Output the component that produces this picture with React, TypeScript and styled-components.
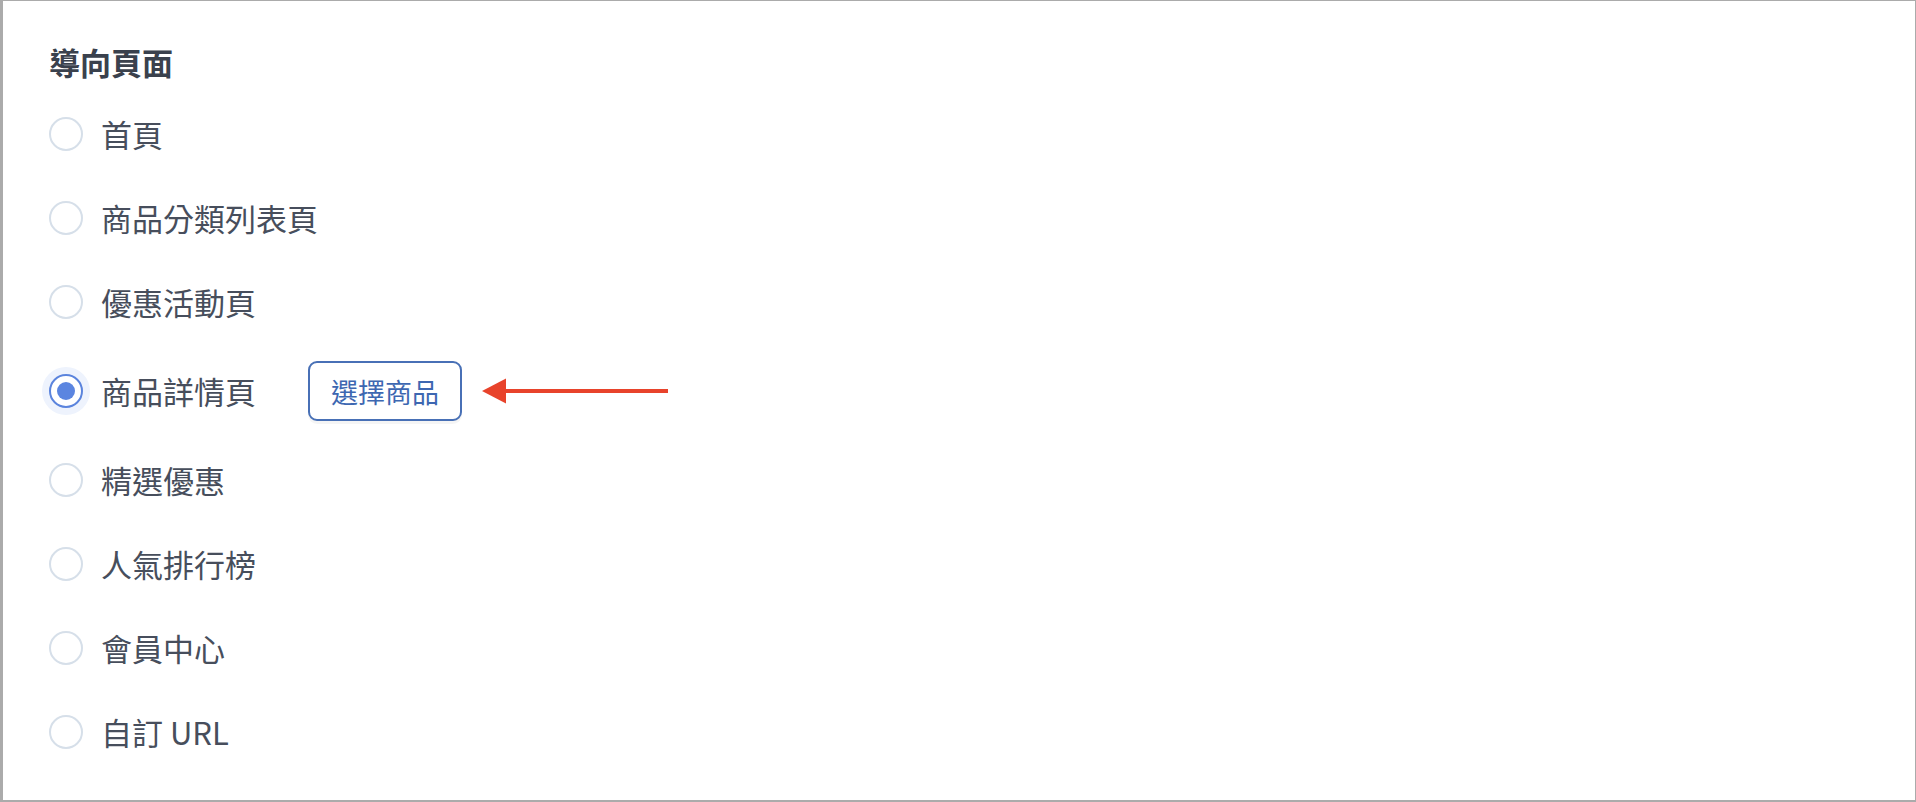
import React, { useState } from "react";
import styled, { createGlobalStyle } from "styled-components";

const GlobalStyle = createGlobalStyle`
  html, body {
    margin: 0;
    padding: 0;
    background: #ffffff;
  }
  body {
    font-family: "Noto Sans CJK TC", "Noto Sans", sans-serif;
  }
`;

const Frame = styled.div`
  box-sizing: border-box;
  width: 1916px;
  height: 802px;
  background: #ffffff;
  border-style: solid;
  border-color: #ababab;
  border-width: 1px 1px 2px 3px;
  padding: 40px 46px 0;
`;

const Title = styled.h2`
  margin: 0 0 26px;
  font-size: 31px;
  line-height: 42px;
  font-weight: 700;
  color: #3a414d;
`;

const Options = styled.div`
  display: flex;
  flex-direction: column;
  gap: 34px;
`;

const Row = styled.label`
  display: flex;
  align-items: center;
  min-height: 50px;
  cursor: pointer;
`;

const Radio = styled.span<{ $checked: boolean }>`
  box-sizing: border-box;
  flex: 0 0 auto;
  width: 34px;
  height: 34px;
  border-radius: 50%;
  border: 2px solid ${(p) => (p.$checked ? "#5b84dd" : "#d6dfe9")};
  background: #ffffff;
  box-shadow: ${(p) => (p.$checked ? "0 0 0 7px #eef3fd" : "none")};
  display: flex;
  align-items: center;
  justify-content: center;

  &::after {
    content: "";
    display: ${(p) => (p.$checked ? "block" : "none")};
    width: 18px;
    height: 18px;
    border-radius: 50%;
    background: #5b85e0;
  }
`;

const Label = styled.span`
  margin-left: 18px;
  font-size: 31px;
  line-height: 50px;
  color: #474e5c;
`;

const PickButton = styled.button`
  box-sizing: border-box;
  margin-left: 52px;
  height: 60px;
  padding: 0 21px;
  border: 2px solid #4870b6;
  border-radius: 9px;
  background: #ffffff;
  box-shadow: 0 3px 0 rgba(0, 0, 0, 0.04);
  font-family: "Noto Sans CJK TC", "Noto Sans", sans-serif;
  font-size: 27px;
  color: #3d67b1;
  cursor: pointer;
`;

const Pointer = styled.svg`
  margin-left: 20px;
  flex: 0 0 auto;
`;

const options = [
  "首頁",
  "商品分類列表頁",
  "優惠活動頁",
  "商品詳情頁",
  "精選優惠",
  "人氣排行榜",
  "會員中心",
  "自訂 URL",
];

export default function App() {
  const [selected, setSelected] = useState(3);

  return (
    <>
      <GlobalStyle />
      <Frame>
        <Title>導向頁面</Title>
        <Options>
          {options.map((label, i) => (
            <Row key={label} onClick={() => setSelected(i)}>
              <Radio $checked={selected === i} />
              <Label>{label}</Label>
              {i === 3 && selected === 3 && (
                <>
                  <PickButton type="button">選擇商品</PickButton>
                  <Pointer width="186" height="26" viewBox="0 0 186 26">
                    <polygon points="0,13 24,0.5 24,25.5" fill="#e8432b" />
                    <rect x="22" y="11" width="164" height="4" fill="#e8432b" />
                  </Pointer>
                </>
              )}
            </Row>
          ))}
        </Options>
      </Frame>
    </>
  );
}
